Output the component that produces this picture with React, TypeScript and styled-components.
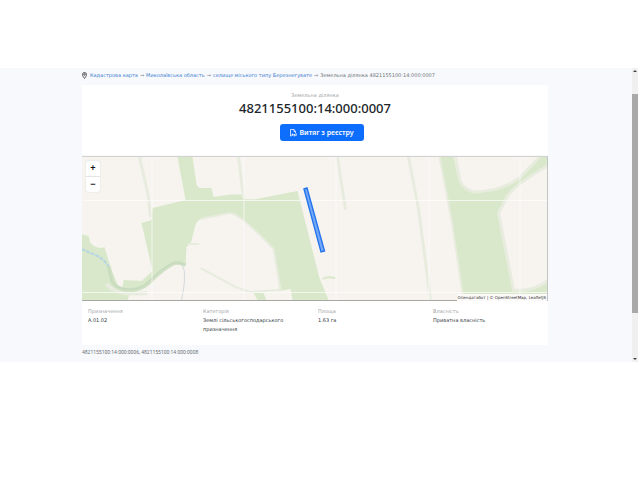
import React from "react";
import styled, { createGlobalStyle } from "styled-components";

const GlobalStyle = createGlobalStyle`
  * { box-sizing: border-box; }
  body {
    margin: 0;
    background: #fff;
    font-family: "DejaVu Sans", "Noto Sans", sans-serif;
    font-size: 5px;
    line-height: 9px;
    color: #444b51;
  }
`;

const Screen = styled.div`
  display: flex;
  margin: 68px 2px 0 0;
  background: #f7f9fc;
`;

const Content = styled.main`
  flex: 1;
  min-width: 0;
  padding: 2px 84px 5px 82px;
`;

const Breadcrumbs = styled.nav`
  display: flex;
  align-items: center;
  gap: 2px;
  height: 10px;
  color: #70757a;
  white-space: nowrap;
`;

const PinIcon = styled.svg`
  flex: none;
  margin-right: 1px;
`;

const Crumb = styled.a`
  color: #3f7fd0;
  text-decoration: none;
`;

const Arrow = styled.span`
  color: #85898e;
`;

const Header = styled.header`
  display: flex;
  flex-direction: column;
  align-items: center;
  margin-top: 5px;
  padding: 6px 0 14px;
  background: #fff;
`;

const Label = styled.div`
  color: #a2a5a8;
`;

const Title = styled.h1`
  margin: 0;
  font-family: "Noto Sans", sans-serif;
  font-size: 13px;
  font-weight: 500;
  line-height: 17px;
  color: #202529;
`;

const ExtractButton = styled.button`
  display: flex;
  align-items: center;
  justify-content: center;
  gap: 2px;
  width: 84px;
  height: 17px;
  margin: 7px 0 0 14px;
  padding: 0;
  border: 0;
  border-radius: 3px;
  background: #0d6efd;
  color: #fff;
  font-family: "Noto Sans", sans-serif;
  font-size: 7px;
  font-weight: 600;
  line-height: 10px;
`;

const MapPane = styled.section`
  position: relative;
  height: 145px;
  margin-top: 1px;
  border-top: 1px solid #d2d2cf;
  border-bottom: 1px solid #aaa7a3;
  border-right: 1px solid #c3c6c0;
  background: #f7f4f0;
`;

const MapDrawing = styled.svg`
  display: block;
  width: 100%;
  height: 100%;
`;

const ZoomControl = styled.div`
  position: absolute;
  top: 4px;
  left: 4px;
  display: flex;
  flex-direction: column;
  border-radius: 2px;
  background: #fff;
  box-shadow: 0 0 1px #bbb;
`;

const ZoomButton = styled.button`
  width: 14px;
  height: 15px;
  padding: 0;
  border: 0;
  background: transparent;
  color: #111;
  font-family: "Liberation Sans", sans-serif;
  font-size: 9px;
  font-weight: 700;
  line-height: 15px;
  & + & {
    height: 16px;
    border-top: 1px solid #e4e4e4;
  }
`;

const Attribution = styled.div`
  position: absolute;
  right: 0;
  bottom: -1px;
  padding: 0 1px;
  background: #fbfaf8;
  font-size: 4px;
  line-height: 7px;
  color: #333;
  white-space: nowrap;
  a { color: inherit; text-decoration: none; }
`;

const Details = styled.dl`
  display: grid;
  grid-template-columns: repeat(4, 1fr);
  margin: 0;
  padding: 6px 3px 11px;
  background: #fff;
`;

const Detail = styled.div`
  padding: 0 20px 0 3px;
  dt { color: #a2a5a8; }
  dd { margin: 0; color: #33393e; }
`;

const Neighbours = styled.p`
  margin: 3px 0 0;
  font-family: Roboto, sans-serif;
  color: #6c7176;
`;

const Scrollbar = styled.div`
  display: flex;
  flex-direction: column;
  width: 6px;
  background: #f0f0f0;
`;

const ScrollTrack = styled.div`
  flex: 1;
  display: grid;
  grid-template-rows: 20fr 219fr 43fr;
`;

const ScrollThumb = styled.div`
  grid-row: 2;
  background: #a9a9a9;
`;

const ScrollArrow = styled.svg`
  display: block;
  width: 6px;
  height: 6px;
`;

const crumbs = ["Кадастрова карта", "Миколаївська область", "селище міського типу Березнегувате"];

const details = [
  ["Призначення", "A.01.02"],
  ["Категорія", "Землі сільськогосподарського призначення"],
  ["Площа", "1.63 га"],
  ["Власність", "Приватна власність"],
];

function FieldMap() {
  return (
    <MapDrawing viewBox="82 157 466 143" preserveAspectRatio="xMidYMid slice" aria-hidden="true">
      <g fill="#d9e8ca">
        <path d="M178 157H193L197 184Q198 188 202 188H212L214 197L231 194.500H243L245 199Q254 200 262 198L298 191L320 278L329 300H293L291 289L280 291L275 250L263 237L236 214Q230 212 222 215L201 219Q196 222 195 229L191 244L187 247L186 265L175 263L153 280L142 281L153 271L142 223L152 220L153 208L186 200Z" />
        <path d="M82 234L89 236L91 243Q98 250 105 247L112 270L119 287H123L124 280L144 281L155 269L165 270Q147 288 131 292L128 300H82Z" />
        <path d="M440 157H454L459 179Q463 189 474 192Q500 193 520 178Q532 170 538 157H548V166Q516 184 508 196L499 213L514 290H526Q538 288 548 281V300H464L452 220Z" />
        <path d="M254 293H264L267 300H258Z" />
      </g>
      <g fill="none" stroke="#e8ecdf" strokeWidth="3">
        <path d="M140 157L149 197L151 217" />
        <path d="M239 157L244 198" />
        <path d="M338 157L346 210" />
        <path d="M409 157L419 209L431 300" />
        <path d="M440 157L452 220L464 300" strokeWidth="2" />
        <path d="M456 157L460 179Q463 189 474 192Q500 192 520 178L540 157" />
        <path d="M548 166Q516 184 508 196L499 213L514 290Q532 292 548 281" />
        <path d="M201 219L230 213Q240 213 274 249L281 290" strokeWidth="2" />
        <path d="M201 268L236 287L251 292L280 290" strokeWidth="2" />
        <path d="M188 244H200" strokeWidth="2" />
        <path d="M107 284Q117 296 148 293" strokeWidth="4" />
      </g>
      <path d="M323 279Q328 276 336 278" fill="none" stroke="#d9e8ca" strokeWidth="2" />
      <path d="M109 266L113 282Q117 289 127 290Q141 291 150 282Q164 268 175 263Q181 262 186 265" fill="none" stroke="#d0e1c3" strokeWidth="4" />
      <path d="M109 266L112 281Q116 288 127 289Q141 291 151 280Q166 265 175 263Q181 262 186 265" fill="none" stroke="#c2d8bd" />
      <path d="M182 264Q186 270 185 278Q185 286 182 300" fill="none" stroke="#d3d9dc" />
      <path d="M82 249L91 253L98 256L104 260L109 266" fill="none" stroke="#b4d5e4" strokeWidth="2" strokeDasharray="4 1" />
      <path d="M82 200.500H548M82 292.500H548M152.500 157V300M244.500 157V300M336.500 157V300M429.500 157V300M520.500 157V300" stroke="#fff" strokeOpacity=".65" />
      <path d="M304.500 189L307.500 188L325 251L321.500 252Z" fill="#76a9f7" stroke="#2474ec" strokeWidth="1.400" />
    </MapDrawing>
  );
}

export default function App() {
  return (
    <>
      <GlobalStyle />
      <Screen>
        <Content>
          <Breadcrumbs aria-label="Навігація">
            <PinIcon width="5" height="7" viewBox="0 0 10 14" fill="none" stroke="#33383c" strokeWidth="1.600">
              <path d="M5 13C2 9 1 7 1 5a4 4 0 0 1 8 0c0 2-1 4-4 8Z" />
              <circle cx="5" cy="5" r="1.500" />
            </PinIcon>
            {crumbs.map((name) => (
              <React.Fragment key={name}>
                <Crumb href="#">{name}</Crumb>
                <Arrow>→</Arrow>
              </React.Fragment>
            ))}
            <span>Земельна ділянка 4821155100:14:000:0007</span>
          </Breadcrumbs>
          <Header>
            <Label>Земельна ділянка</Label>
            <Title>4821155100:14:000:0007</Title>
            <ExtractButton type="button">
              <svg width="7" height="8" viewBox="0 0 14 16" fill="none" stroke="#fff" strokeWidth="1.500">
                <path d="M3 14H1V1h7l3 4v4M8 1v4h3" />
                <path d="M4 14v-4h2v2H4M8 14v-4l2 2v2H8M12 14v-4h2" />
              </svg>
              Витяг з реєстру
            </ExtractButton>
          </Header>
          <MapPane aria-label="Карта">
            <FieldMap />
            <ZoomControl>
              <ZoomButton type="button">+</ZoomButton>
              <ZoomButton type="button">−</ZoomButton>
            </ZoomControl>
            <Attribution>
              <a href="#">Опендатабот</a> | © <a href="#">OpenStreetMap</a>, <a href="#">LeafletJS</a>
            </Attribution>
          </MapPane>
          <Details>
            {details.map(([name, value]) => (
              <Detail key={name}>
                <dt>{name}</dt>
                <dd>{value}</dd>
              </Detail>
            ))}
          </Details>
          <Neighbours>4821155100:14:000:0006, 4821155100:14:000:0008</Neighbours>
        </Content>
        <Scrollbar aria-hidden="true">
          <ScrollArrow viewBox="0 0 6 6"><path d="M1 4L3 2L5 4Z" fill="#444" /></ScrollArrow>
          <ScrollTrack><ScrollThumb /></ScrollTrack>
          <ScrollArrow viewBox="0 0 6 6"><path d="M1 2L3 4L5 2Z" fill="#444" /></ScrollArrow>
        </Scrollbar>
      </Screen>
    </>
  );
}
